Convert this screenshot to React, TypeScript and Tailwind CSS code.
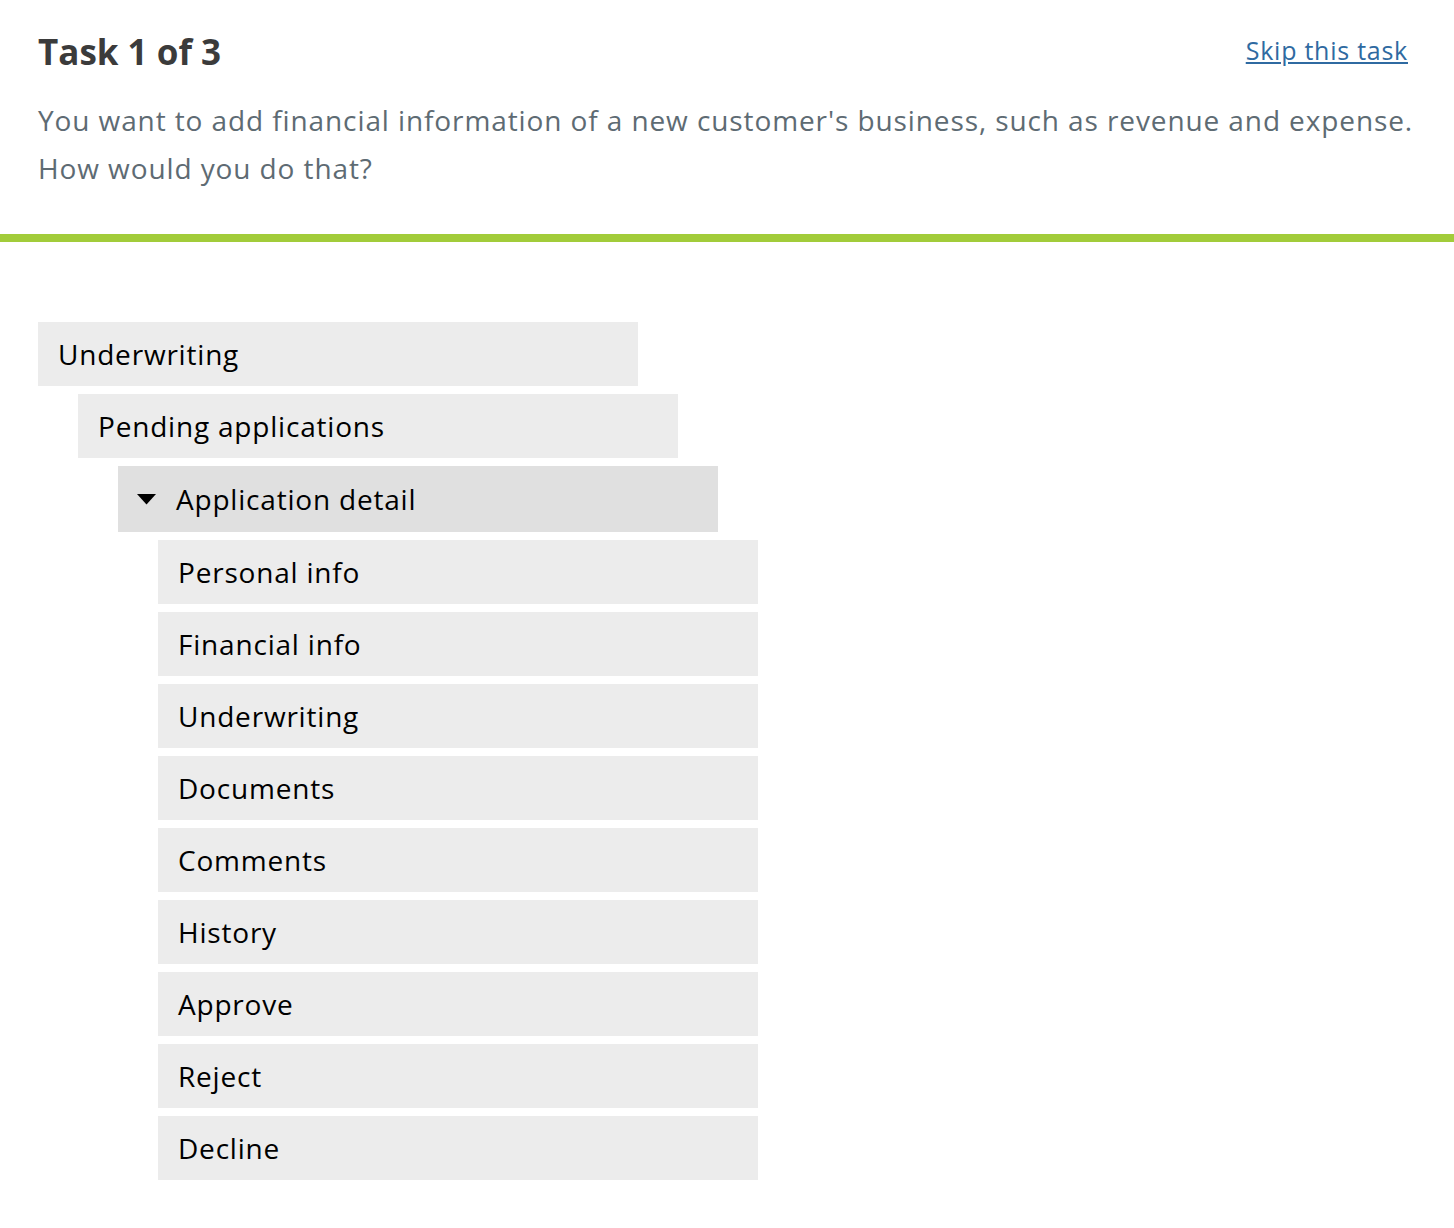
import { ReactNode } from 'react';

const children = [
  'Personal info',
  'Financial info',
  'Underwriting',
  'Documents',
  'Comments',
  'History',
  'Approve',
  'Reject',
  'Decline',
];

function Row({ indent, active, children }: { indent: string; active?: boolean; children: ReactNode }) {
  return (
    <div className={indent}>
      <div
        className={`w-[600px] flex items-center px-5 text-[28px] tracking-[0.8px] text-black ${
          active ? 'h-[66px] bg-[#e0e0e0]' : 'h-16 bg-[#ececec]'
        }`}
      >
        {children}
      </div>
    </div>
  );
}

export default function App() {
  return (
    <div className="min-h-[1228px] bg-white font-['Open_Sans',sans-serif]">
      <div className="px-[38px] pt-[28px] pb-[42px]">
        <div className="flex items-start justify-between">
          <h1 className="text-[35px] font-bold text-[#3b3b3b] leading-[48px]">Task 1 of 3</h1>
          <a href="#" className="text-[25px] tracking-[0.75px] text-[#2f6aa1] underline mt-[4px] mr-[8px]">
            Skip this task
          </a>
        </div>
        <p className="mt-[20px] text-[28px] tracking-[0.9px] leading-[48px] text-[#5e6b73] whitespace-nowrap">
          You want to add financial information of a new customer's business, such as revenue and expense.
          <br />
          How would you do that?
        </p>
      </div>
      <div className="h-2 bg-[#a2cc3a]" />
      <div className="pt-20 px-[38px] flex flex-col gap-2">
        <Row indent="">Underwriting</Row>
        <Row indent="pl-10">Pending applications</Row>
        <Row indent="pl-20" active>
          <svg width="19" height="11" viewBox="0 0 19 11" className="mr-[20px] -ml-[1px]">
            <path d="M0 0 L19 0 L9.5 10.5 Z" fill="#000" />
          </svg>
          Application detail
        </Row>
        {children.map((c) => (
          <Row key={c} indent="pl-[120px]">
            {c}
          </Row>
        ))}
      </div>
    </div>
  );
}
